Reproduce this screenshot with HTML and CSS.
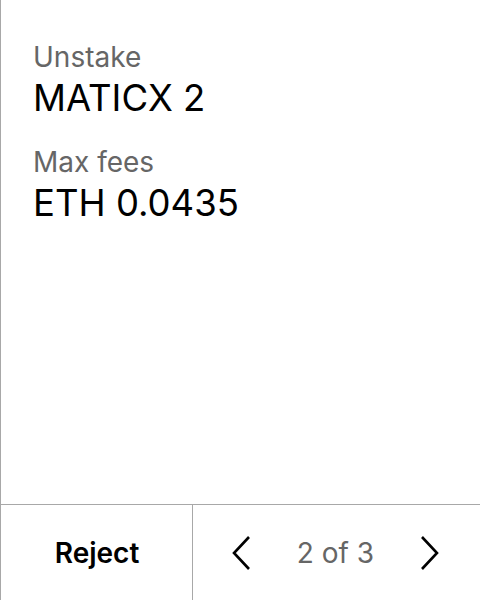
FILE: index.html
```html
<!DOCTYPE html>
<html>
<head>
<meta charset="utf-8">
<link rel="stylesheet" href="styles.css">
</head>
<body>
<div class="screen">
  <div class="content">
    <div class="field">
      <div class="label">Unstake</div>
      <div class="value">MATICX 2</div>
    </div>
    <div class="field">
      <div class="label">Max fees</div>
      <div class="value">ETH 0.0435</div>
    </div>
  </div>
  <div class="footer">
    <div class="reject">Reject</div>
    <div class="pager">
      <svg class="chev" width="20" height="36" viewBox="0 0 20 36"><path d="M17 2 L2 18 L17 34" fill="none" stroke="#000" stroke-width="2.6"/></svg>
      <span class="count">2 of 3</span>
      <svg class="chev" width="20" height="36" viewBox="0 0 20 36"><path d="M3 2 L18 18 L3 34" fill="none" stroke="#000" stroke-width="2.6"/></svg>
    </div>
  </div>
</div>
</body>
</html>
```
FILE: styles.css
```css
html, body { margin: 0; padding: 0; background: #fff; }
body { font-family: Inter, "Noto Sans", sans-serif; color: #000; }
.screen { width: 480px; height: 600px; box-sizing: border-box; border-left: 1px solid #a8a8a8; display: flex; flex-direction: column; }
.content { flex: 1; padding: 40px 32px 0 32px; display: flex; flex-direction: column; gap: 25px; }
.field { display: flex; flex-direction: column; gap: 2px; }
.label { font-size: 28px; color: #666; line-height: 34px; }
.value { font-size: 36.5px; line-height: 44px; }
.footer { height: 96px; box-sizing: border-box; border-top: 1px solid #a8a8a8; display: flex; }
.reject { width: 192px; box-sizing: border-box; border-right: 1px solid #a8a8a8; display: flex; align-items: center; justify-content: center; font-weight: 600; font-size: 28px; padding-left: 1px; }
.pager { flex: 1; display: flex; align-items: center; justify-content: space-between; padding: 0 41px 0 39px; }
.count { font-size: 28px; color: #666; }
```
